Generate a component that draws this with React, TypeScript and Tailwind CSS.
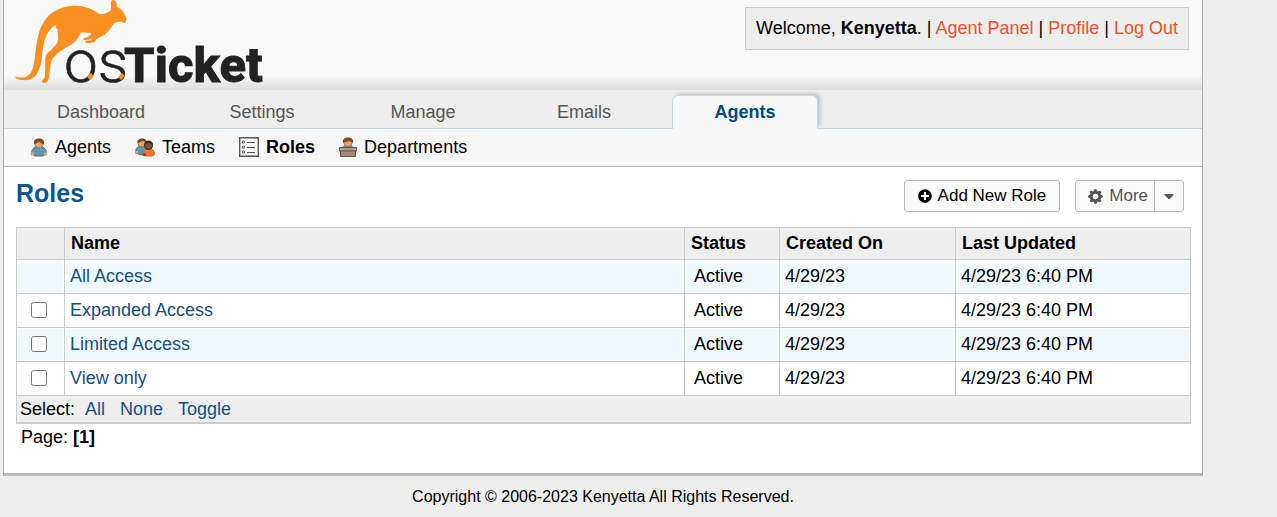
import React from "react";
import { FaPlusCircle, FaCaretDown } from "react-icons/fa";
import { BsGearFill } from "react-icons/bs";

const tabs = ["Dashboard", "Settings", "Manage", "Emails", "Agents"];

const roles = [
  { name: "All Access", locked: true },
  { name: "Expanded Access", locked: false },
  { name: "Limited Access", locked: false },
  { name: "View only", locked: false },
];

function Logo() {
  return (
    <svg viewBox="4 0 270 89" className="block h-[89px] w-[270px] overflow-visible" role="img" aria-label="osTicket">
      <g transform="scale(0.33333)" fill="#f98f20">
        <path d="M333 16C331 6 334 0 340 0C348 2 351 9 351 20C362 24 369 35 377 48C381 55 381 60 377 63C379 68 373 71 368 67C360 64 350 66 343 70C333 82 326 96 311 106C301 112 291 115 288 118C285 127 276 131 260 129C253 127 254 122 263 122C272 122 276 119 277 114C268 118 260 122 252 119C248 117 250 114 256 113C268 110 273 105 274 99L242 97C238 112 226 129 207 138C192 146 173 158 160 173C151 184 152 199 149 216C147 230 147 241 140 246C136 249 129 250 126 246C124 241 132 238 134 232C138 209 134 186 137 168C140 157 166 142 173 125C177 113 171 101 174 91C168 86 169 80 167 75C152 83 142 98 135 117C127 140 128 166 122 193C115 221 103 237 84 240C69 242 53 238 46 233C44 230 49 230 52 231C68 236 84 232 94 215C104 196 104 165 109 137C114 104 121 78 138 56C157 31 190 18 225 17C253 17 278 27 294 40C306 47 327 39 333 28Z" />
      </g>
      <text x="64" y="82" fontFamily="Roboto, 'Liberation Sans', sans-serif" fontWeight="300" fontSize="60" fill="#222" stroke="#222" strokeWidth="0.6">
        os
      </text>
      <text x="124" y="82" fontFamily="Roboto, 'Liberation Sans', sans-serif" fontWeight="800" fontSize="49" fill="#222" stroke="#222" strokeWidth="0.8">
        Ticket
      </text>
      <path d="M87 77l4-4 3 3-4 4zM118 77l4-4 3 3-4 4z" fill="#f98f20" />
    </svg>
  );
}

function AgentIcon() {
  return (
    <svg viewBox="0 0 18 19" className="h-[19px] w-[18px]" aria-hidden="true">
      <path d="M2 16c-1-4 1-6 4-7h6c3 1 5 3 4 7l-3 2H5z" fill="#5b95ba" stroke="#4a7593" />
      <path d="M.5 15.500l1.500-2 2 1.500v2.500h-3zM17.500 15.500l-1.500-2-2 1.500v2.500h3z" fill="#dba26e" />
      <circle cx="9" cy="6" r="4.200" fill="#dfa36d" stroke="#8a5a33" strokeWidth=".7" />
      <path d="M4.200 6C3 2 6 .5 9 .5s6 1.500 4.800 5.500c-2 0-4-2-4.800-2S6 6 4.200 6z" fill="#80491c" />
    </svg>
  );
}

function TeamsIcon() {
  return (
    <svg viewBox="0 0 20 19" className="h-[19px] w-5" aria-hidden="true">
      <path d="M1 15c-1-4 1-6 4-7h5l3 8-7 1z" fill="#5b95ba" stroke="#4a7593" />
      <path d="M0 13h3v3H0z" fill="#dba26e" />
      <circle cx="7" cy="5" r="4" fill="#dfa36d" stroke="#8a5a33" strokeWidth=".7" />
      <path d="M2.500 5C2 2 4 0.500 7 .5s5 1.500 4.500 3.500c-2 0-3-1-4-1S5 5 2.500 5z" fill="#80491c" />
      <path d="M8 17c-1-3 1-5 3-6h5c3 1 4 3 3 6l-2 1h-7z" fill="#f4732d" stroke="#dd6224" />
      <path d="M7 16l2-1 2 1v2H8z" fill="#7a5236" />
      <circle cx="13.500" cy="7.500" r="4" fill="#7a5236" stroke="#38251a" />
      <path d="M9 7c0-3 2-4.500 4.500-4.500S18 4 18 7c-2-1-3-2-4.500-2S11 6 9 7z" fill="#3d3028" />
    </svg>
  );
}

function RolesIcon() {
  return (
    <svg viewBox="0 0 20 20" className="h-5 w-5" fill="none" aria-hidden="true">
      <path d="M.7.700h18.600v18.600H.7z" fill="#fafafa" stroke="#555" strokeWidth="1.400" />
      <path d="M3.500 4h2v2h-2zM3.500 9h2v2h-2zM3.500 14h2v2h-2z" stroke="#666" />
      <path d="M8 5.500h8M8 10.500h8M8 15.500h8" stroke="#555" strokeWidth="1.200" />
    </svg>
  );
}

function DepartmentsIcon() {
  return (
    <svg viewBox="0 0 18 20" className="h-5 w-[18px]" aria-hidden="true">
      <path d="M3 12c0-3 2-4 4-4h4c2 0 4 1 4 4z" fill="#5b95ba" />
      <circle cx="9" cy="5.500" r="4.200" fill="#dfa36d" stroke="#8a5a33" strokeWidth=".7" />
      <path d="M4 5.500C3 2 6 .5 9 .5s6 1.500 5 5c-2 0-3-1.500-4-1.500s-4 1.500-6 1.500z" fill="#80491c" />
      <path d="M.5 10.500h17v3.500H.5z" fill="#b39a88" stroke="#67584e" />
      <path d="M1.500 14h15v5.500h-15z" fill="#a58b79" stroke="#67584e" />
    </svg>
  );
}

const subnav = [
  { label: "Agents", icon: <AgentIcon />, active: false },
  { label: "Teams", icon: <TeamsIcon />, active: false },
  { label: "Roles", icon: <RolesIcon />, active: true },
  { label: "Departments", icon: <DepartmentsIcon />, active: false },
];

export default function App() {
  const [checked, setChecked] = React.useState<string[]>([]);
  const selectable = roles.filter((r) => !r.locked).map((r) => r.name);
  const flip = (name: string) =>
    setChecked((c) => (c.includes(name) ? c.filter((n) => n !== name) : [...c, name]));

  const th = "border border-[#ccc] bg-[#eee] px-1.5 pb-0.5 text-left font-bold";
  const td = "border border-[#ccc] px-[5px] pb-0.5";

  return (
    <div className="min-h-screen bg-[#eee] pl-[3px] font-['Liberation_Sans',Arial,sans-serif] text-[18px] leading-5 text-black">
      <div className="w-full max-w-[1200px]">
        <div className="border-x border-b-3 border-x-[#aaa] border-b-[#bbb] bg-white">
          <header className="flex items-start justify-between border-b border-[#ddd] bg-[linear-gradient(to_top,#dfdfdf_0,#f8f8f8_14px)] pr-[13px]">
            <a href="#home">
              <Logo />
            </a>
            <p className="mt-[7px] border border-[#ccc] bg-[#eee] px-2.5 pt-2.5 pb-[11px]">
              Welcome, <strong>Kenyetta</strong>. |{" "}
              <a href="#panel" className="text-[#e8552d]">Agent Panel</a> |{" "}
              <a href="#profile" className="text-[#e8552d]">Profile</a> |{" "}
              <a href="#logout" className="text-[#e8552d]">Log Out</a>
            </p>
          </header>

          <nav className="flex gap-[15px] border-b border-[#c5d9e8] bg-[#eee] pt-[5px] pl-6">
            {tabs.map((tab) =>
              tab === "Agents" ? (
                <a
                  key={tab}
                  href="#agents"
                  className="-mb-px w-[146px] rounded-t-md border border-b-0 border-[#c5d9ee] bg-[#f7f7f7] pt-[6px] pb-[7px] text-center font-bold text-[#004a80] shadow-[3px_-2px_4px_-1px_#bbb] [clip-path:inset(-6px_-8px_0_0)]"
                >
                  {tab}
                </a>
              ) : (
                <a key={tab} href={"#" + tab.toLowerCase()} className="w-[146px] pt-[7px] pb-1.5 text-center text-[#555]">
                  {tab}
                </a>
              ),
            )}
          </nav>

          <nav className="flex gap-6 border-b border-[#bbb] bg-[#f7f7f7] pt-2 pb-[9px] pl-[26px]">
            {subnav.map((item) => (
              <a
                key={item.label}
                href={"#" + item.label.toLowerCase()}
                className={item.active ? "flex items-center gap-[7px] font-bold" : "flex items-center gap-[7px]"}
              >
                {item.icon}
                {item.label}
              </a>
            ))}
          </nav>

          <main className="pt-[13px] pr-[11px] pb-[26px] pl-3">
            <div className="flex items-start justify-between pr-[7px]">
              <h2 className="text-[25px] leading-[26px] font-bold text-[#0a568e]">Roles</h2>
              <div className="flex gap-[15px] text-[17px] leading-[30px]">
                <button type="button" className="flex items-center gap-1.5 rounded-[3px] border border-[#bbb] bg-[#fafafa] px-[13px]">
                  <FaPlusCircle size={14} />
                  Add New Role
                </button>
                <button type="button" className="flex items-center rounded-[3px] border border-[#bbb] bg-[#fafafa] text-[#555]">
                  <span className="flex items-center gap-1.5 border-r border-[#bbb] pr-1.5 pl-3">
                    <BsGearFill size={15} />
                    More
                  </span>
                  <FaCaretDown size={16} className="mx-1.5" />
                </button>
              </div>
            </div>

            <table className="mt-[15px] w-full table-fixed border-collapse">
              <thead>
                <tr className="h-8">
                  <th className={th + " w-12"} aria-label="Selected" />
                  <th className={th}>Name</th>
                  <th className={th + " w-[95px]"}>Status</th>
                  <th className={th + " w-[176px]"}>Created On</th>
                  <th className={th + " w-[235px]"}>Last Updated</th>
                </tr>
              </thead>
              <tbody className="[&_td]:shadow-[inset_0_0_0_1px_white]">
                {roles.map((role) => (
                  <tr key={role.name} className="h-[34px] odd:bg-[#f0f9ff] even:bg-white">
                    <td className="border border-[#ccc] pr-[7px] pb-0.5 pl-[3px]">
                      {!role.locked && (
                        <input
                          type="checkbox"
                          aria-label={role.name}
                          checked={checked.includes(role.name)}
                          onChange={() => flip(role.name)}
                          className="mx-auto block size-4"
                        />
                      )}
                    </td>
                    <td className={td}>
                      <a href="#role" className="text-[#184e81]">{role.name}</a>
                    </td>
                    <td className="border border-[#ccc] px-[9px] pb-0.5">Active</td>
                    <td className={td}>4/29/23</td>
                    <td className={td}>4/29/23 6:40 PM</td>
                  </tr>
                ))}
              </tbody>
              <tfoot>
                <tr className="h-[27px]">
                  <td colSpan={5} className="border border-b-2 border-[#ccc] bg-[#eee] px-[3px]">
                    <div className="flex">
                      <span className="mr-2.5">Select:</span>
                      <button type="button" onClick={() => setChecked(selectable)} className="mr-[15px] text-[#184e81]">All</button>
                      <button type="button" onClick={() => setChecked([])} className="mr-[15px] text-[#184e81]">None</button>
                      <button
                        type="button"
                        onClick={() => setChecked(selectable.filter((n) => !checked.includes(n)))}
                        className="text-[#184e81]"
                      >
                        Toggle
                      </button>
                    </div>
                  </td>
                </tr>
              </tfoot>
            </table>
            <p className="mt-[3px] pl-[5px]">
              Page: <b>[1]</b>
            </p>
          </main>
        </div>
        <footer className="pt-[11px] text-center text-[16px]">Copyright © 2006-2023 Kenyetta All Rights Reserved.</footer>
      </div>
    </div>
  );
}
